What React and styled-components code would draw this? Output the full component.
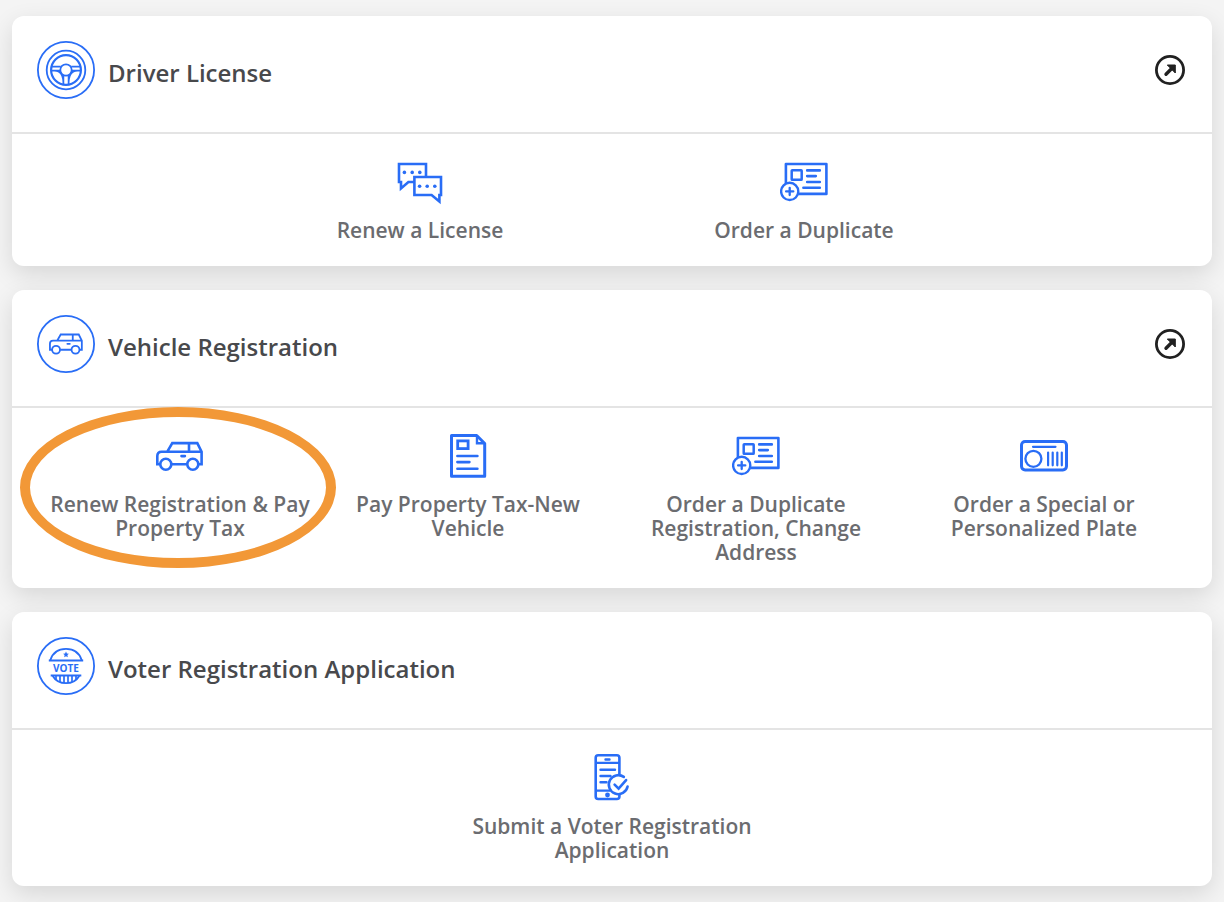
import React from "react";
import styled, { createGlobalStyle } from "styled-components";

const GlobalStyle = createGlobalStyle`
  *, *::before, *::after { box-sizing: border-box; }
  body {
    margin: 0;
    background: #f4f4f4;
    font-family: "Open Sans", sans-serif;
  }
`;

const Page = styled.main`
  display: flex;
  flex-direction: column;
  gap: 24px;
  padding: 16px 12px;
`;

const Card = styled.section`
  background: #fff;
  border-radius: 12px;
  box-shadow: 0 8px 24px rgba(0, 0, 0, 0.12);
`;

const CardHeader = styled.header`
  display: flex;
  align-items: center;
  gap: 12px;
  padding: 24px 24px 32px;
  border-bottom: 2px solid #e4e4e4;
`;

const Title = styled.h2`
  flex: 1;
  margin: 0;
  padding-top: 6px;
  font-size: 24px;
  line-height: 32px;
  font-weight: 600;
  color: #48494c;
`;

const OpenLink = styled.a`
  display: flex;
  color: #212121;
`;

const Actions = styled.ul`
  display: flex;
  justify-content: center;
  margin: 0;
  padding: 24px;
  list-style: none;
`;

const Action = styled.li`
  position: relative;
  flex: 0 1 calc(100% / ${(p) => p.$columns});
  min-width: 0;
`;

const ActionLink = styled.a`
  display: flex;
  flex-direction: column;
  align-items: center;
  gap: 12px;
  padding: 0 12px;
  color: #6b6c70;
  font-size: 21px;
  line-height: 24px;
  font-weight: 600;
  text-align: center;
  text-decoration: none;
`;

const ActionLabel = styled.span`
  max-width: 280px;
`;

const Highlight = styled.span`
  position: absolute;
  inset: -25px -12px -4px -16px;
  border: 10px solid #f29837;
  border-radius: 50%;
  pointer-events: none;
`;

const Glyph = styled.svg`
  display: block;
  flex: none;
  width: ${(p) => p.$size}px;
  height: ${(p) => p.$size}px;
  fill: none;
  stroke: ${(p) => p.$color || "#296df6"};
`;

const BadgeText = styled.text`
  font-family: "Open Sans", sans-serif;
  font-size: 10px;
  font-weight: 700;
  fill: #296df6;
  stroke: none;
`;

const ActionGlyph = ({ children }) => (
  <Glyph $size={48} viewBox="0 0 48 48" strokeWidth="2.6" aria-hidden="true">
    {children}
  </Glyph>
);

const Badge = ({ children }) => (
  <Glyph $size={60} viewBox="0 0 60 60" strokeWidth="1.8" aria-hidden="true">
    <circle cx="30" cy="30" r="28.1" />
    {children}
  </Glyph>
);

const carShape = (
  <>
    <path d="M4.3 32.3H1.3V24q0-4.3 4.3-4.3H46M11.3 19.7l5-8.6h25l4.3 8.6v12.6h-3.2M15.4 32.3H31M33 11v8.7" />
    <circle cx="9.8" cy="32.3" r="5.5" />
    <circle cx="36.8" cy="32.3" r="5.5" />
    <path d="M25.5 24.1h3.4" strokeLinecap="round" />
  </>
);

const Car = () => <ActionGlyph>{carShape}</ActionGlyph>;

const Chat = () => (
  <ActionGlyph>
    <path d="M18 24h-5.6L5 30.4V24H3V6h27v12" />
    <path d="M18.4 19H45v18h-1.6v6.4L35.6 37H18.4z" />
    <g fill="#296df6" stroke="none">
      <circle cx="8.4" cy="14.4" r="1.8" />
      <circle cx="16.2" cy="14.4" r="1.8" />
      <circle cx="23.8" cy="14.4" r="1.8" />
      <circle cx="23.6" cy="28.2" r="1.8" />
      <circle cx="31.2" cy="28.2" r="1.8" />
      <circle cx="38.8" cy="28.2" r="1.8" />
    </g>
  </ActionGlyph>
);

const Duplicate = () => (
  <ActionGlyph>
    <path d="M5.9 26V6h40.5v29.9H18.5" strokeLinejoin="round" />
    <rect x="11.7" y="12.2" width="10" height="9.6" rx="0.6" strokeWidth="2.5" />
    <path d="M27.2 12.4h12.6M27.2 18.1h8.6M27.2 24h12.6M23.4 29.8h16.4" strokeLinecap="round" />
    <circle cx="9.7" cy="33.4" r="8.6" strokeWidth="2.4" />
    <path d="M9.7 29.8v7.2M6.1 33.4h7.2" strokeLinecap="round" strokeWidth="2.3" />
  </ActionGlyph>
);

const Document = () => (
  <ActionGlyph>
    <path d="M7.5 3.5h25.2l8 8v32.8H7.5z" strokeWidth="3" strokeLinejoin="round" />
    <path d="M33 4v7.3h7.5" strokeWidth="2.4" />
    <rect x="13.7" y="8.9" width="10.4" height="7.7" strokeWidth="2.8" />
    <path d="M13.4 24h20M13.4 30.1h12M13.4 36.8h20" strokeLinecap="round" />
  </ActionGlyph>
);

const Plate = () => (
  <ActionGlyph>
    <rect x="1.5" y="9.5" width="45" height="28.4" rx="3.6" strokeWidth="3" />
    <circle cx="13.4" cy="26.8" r="8" strokeWidth="2.3" />
    <path d="M13 14.8h22.5M28.1 20.6v12.7M32.7 20.6v12.7M37.3 20.6v12.7M41.8 20.6v12.7" strokeWidth="2.2" strokeLinecap="round" />
  </ActionGlyph>
);

const Phone = () => (
  <ActionGlyph>
    <path d="M31.4 20V3.8q0-2.5-2.5-2.5H10.2q-2.5 0-2.5 2.5v38.7q0 2.5 2.5 2.5h18.7q2.5 0 2.5-2.5V41" />
    <path d="M7.7 8.9h23.7M7.7 36.7H22" strokeWidth="2.2" />
    <path d="M17.5 5.5h4M12.5 15.7h14.5M12.5 22h10M12.5 28.3h6" strokeLinecap="round" strokeWidth="2.4" />
    <circle cx="19.5" cy="41" r="2.4" fill="#296df6" stroke="none" />
    <path d="M35.8 22.9A9.5 9.5 0 1 0 39.6 32.6M26.6 30.7l4 4 7.5-8.6" strokeLinecap="round" />
  </ActionGlyph>
);

const WheelBadge = () => (
  <Badge>
    <circle cx="30" cy="30" r="19.3" />
    <circle cx="30" cy="30" r="14.9" strokeWidth="2.2" />
    <circle cx="30" cy="30" r="5.7" />
    <path d="M15.8 26.6h9M35.2 26.6h9M15.2 30.7h9M35.8 30.7h9M18.5 30.7c5.8 0 8.9 4.3 8.9 13.3M41.5 30.7c-5.8 0-8.9 4.3-8.9 13.3M27.4 44v-8.9M32.6 44v-8.9" strokeWidth="1.7" />
  </Badge>
);

const CarBadge = () => (
  <Badge>
    <g transform="translate(13 12.5) scale(0.72)" strokeWidth="2.5">
      {carShape}
    </g>
  </Badge>
);

const VoteBadge = () => (
  <Badge>
    <path d="M12.8 24.6h34.4" strokeWidth="2" />
    <path d="M14.3 24.3C16.5 17 22.4 12.9 30 12.9s13.5 4.1 15.7 11.4" />
    <path d="M30 15.6l.9 1.9 2 .2-1.5 1.4.4 2.1-1.8-1-1.8 1 .4-2.1-1.5-1.4 2-.2z" fill="#296df6" stroke="none" />
    <BadgeText x="30" y="36" textAnchor="middle">VOTE</BadgeText>
    <path d="M14.7 39.5h30.6" strokeWidth="2" />
    <path d="M16.7 40c2.8 4.7 7.5 7.2 13.3 7.2s10.5-2.5 13.3-7.2" />
    <path d="M20 39v4.3M24 39v7M28 39v8M32 39v8M36 39v7M40 39v4.3" strokeWidth="1.7" />
  </Badge>
);

const OpenArrow = () => (
  <Glyph $size={36} $color="currentColor" viewBox="0 0 36 36" strokeWidth="2.8" aria-hidden="true">
    <circle cx="18" cy="18" r="13.6" />
    <path d="M14 22.3l6.5-6.5" strokeWidth="3.4" strokeLinecap="round" />
    <path d="M15.3 13h8v8z" fill="currentColor" strokeWidth="1" strokeLinejoin="round" />
  </Glyph>
);

const services = [
  {
    title: "Driver License",
    badge: WheelBadge,
    opens: true,
    columns: 3,
    actions: [
      { label: "Renew a License", icon: Chat },
      { label: "Order a Duplicate", icon: Duplicate },
    ],
  },
  {
    title: "Vehicle Registration",
    badge: CarBadge,
    opens: true,
    columns: 4,
    actions: [
      { label: "Renew Registration & Pay Property Tax", icon: Car, highlighted: true },
      { label: "Pay Property Tax-New Vehicle", icon: Document },
      { label: "Order a Duplicate Registration, Change Address", icon: Duplicate },
      { label: "Order a Special or Personalized Plate", icon: Plate },
    ],
  },
  {
    title: "Voter Registration Application",
    badge: VoteBadge,
    columns: 3,
    actions: [{ label: "Submit a Voter Registration Application", icon: Phone }],
  },
];

export default function App() {
  return (
    <>
      <GlobalStyle />
      <Page>
        {services.map(({ title, badge: ServiceBadge, opens, columns, actions }) => (
          <Card key={title}>
            <CardHeader>
              <ServiceBadge />
              <Title>{title}</Title>
              {opens && (
                <OpenLink href="#" aria-label={title}>
                  <OpenArrow />
                </OpenLink>
              )}
            </CardHeader>
            <Actions>
              {actions.map(({ label, icon: Icon, highlighted }) => (
                <Action key={label} $columns={columns}>
                  <ActionLink href="#">
                    <Icon />
                    <ActionLabel>{label}</ActionLabel>
                  </ActionLink>
                  {highlighted && <Highlight />}
                </Action>
              ))}
            </Actions>
          </Card>
        ))}
      </Page>
    </>
  );
}
